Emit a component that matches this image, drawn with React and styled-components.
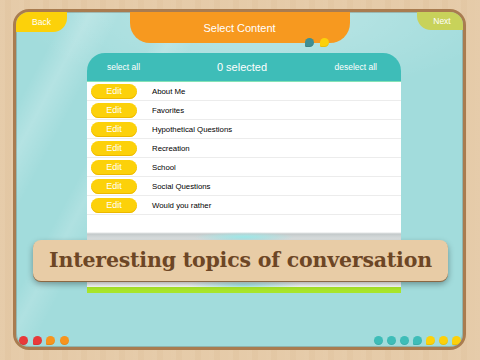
import React from 'react';
import styled, { createGlobalStyle } from 'styled-components';

const Global = createGlobalStyle`
  html, body { margin: 0; padding: 0; }
  body { width: 480px; height: 360px; overflow: hidden; font-family: "Liberation Sans", Arial, sans-serif; }
`;

const Wood = styled.div`
  width: 480px;
  height: 360px;
  box-sizing: border-box;
  padding: 9px 14px 10px 13px;
  display: flex;
  background:
    repeating-linear-gradient(90deg, rgba(255,255,255,0.03) 0 5px, rgba(150,100,50,0.025) 5px 11px, rgba(255,255,255,0.02) 11px 19px),
    #e5caa7;
`;

const Screen = styled.div`
  flex: 1;
  position: relative;
  display: flex;
  flex-direction: column;
  border: 3px solid #a97c50;
  border-radius: 16px;
  overflow: hidden;
  box-shadow: inset 0 0 0 1px rgba(90,60,30,0.25);
  background:
    linear-gradient(118deg, rgba(255,255,255,0) 8%, rgba(255,255,255,0.2) 12%, rgba(255,255,255,0) 17%, rgba(255,255,255,0) 24%, rgba(255,255,255,0.15) 27%, rgba(255,255,255,0) 31%),
    radial-gradient(ellipse 55% 25% at 55% 0%, rgba(255,255,255,0.3), rgba(255,255,255,0)),
    #a2dcdc;
`;

const TopBar = styled.div`
  display: grid;
  grid-template-columns: 1fr 220px 1fr;
  align-items: start;
  height: 31px;
  flex: none;
`;

const Corner = styled.div`
  justify-self: ${p => (p.$side === 'left' ? 'start' : 'end')};
  width: ${p => p.$w}px;
  height: ${p => p.$h}px;
  background: ${p => p.$bg};
  border-bottom-right-radius: ${p => (p.$side === 'left' ? '14px' : '0')};
  border-bottom-left-radius: ${p => (p.$side === 'right' ? '14px' : '0')};
  color: #fff;
  font-size: 8.5px;
  display: flex;
  align-items: center;
  justify-content: center;
  padding-left: ${p => (p.$side === 'right' ? '4px' : '0')};
  box-sizing: border-box;
`;

const Title = styled.div`
  position: relative;
  height: 31px;
  background: #f7991f;
  border-radius: 0 0 20px 20px;
  color: #fff;
  font-size: 11px;
  display: flex;
  align-items: center;
  justify-content: center;
  padding-top: 1px;
  box-sizing: border-box;
`;

const TitleDots = styled.div`
  position: absolute;
  left: 175px;
  top: 26px;
  display: flex;
  gap: 6px;
`;

const Dot = styled.span`
  display: block;
  width: ${p => p.$size || 9}px;
  height: ${p => p.$size || 9}px;
  background: ${p => p.$c};
  border-radius: ${p => (p.$bubble ? '50% 50% 50% 15%' : '50%')};
  box-shadow: inset 0 -1px 0 rgba(0,0,0,0.08);
`;

const Panel = styled.div`
  margin: 10px 0 0 71px;
  width: 314px;
  flex: none;
  display: flex;
  flex-direction: column;
`;

const PanelHeader = styled.div`
  height: 28px;
  border-radius: 18px 18px 0 0;
  background: #3ebdb8;
  border-bottom: 1px solid #84e2b6;
  display: grid;
  grid-template-columns: 1fr auto 1fr;
  align-items: center;
  padding: 0 24px 0 20px;
  color: #fff;
`;

const HeaderText = styled.span`
  font-size: ${p => p.$size}px;
  justify-self: ${p => p.$align};
`;

const Row = styled.div`
  height: 18px;
  border-bottom: 1px solid #ececec;
  background: #fff;
  display: flex;
  align-items: center;
  padding-left: 4px;
`;

const EditPill = styled.span`
  width: 46px;
  height: 15px;
  border-radius: 8px;
  background: #fcd10a;
  box-shadow: inset 0 -1px 0 #ecb800;
  color: #fff;
  font-size: 9px;
  display: flex;
  align-items: center;
  justify-content: center;
  flex: none;
`;

const Label = styled.span`
  margin-left: 15px;
  font-size: 7.8px;
  color: #000;
`;

const PanelFooter = styled.div`
  height: 72px;
  background:
    radial-gradient(ellipse 16% 5px at 50% 22px, rgba(150,235,235,0.9), rgba(150,235,235,0)),
    radial-gradient(ellipse 18% 6px at 50% 70px, rgba(150,235,235,0.8), rgba(150,235,235,0)),
    linear-gradient(to bottom, #fff 0, #fff 17px, #c3c9ca 19px, #dde2e2 24px, #eef1f1 60px, #fff 72px);
`;

const GreenBar = styled.div`
  height: 6px;
  background: #a8e52a;
`;

const Banner = styled.div`
  position: absolute;
  left: 17px;
  top: 228px;
  width: 415px;
  height: 41px;
  border-radius: 8px;
  background: #e8cca6;
  box-shadow: 0 1px 0 #8a6844, 0 3px 6px rgba(0,0,0,0.35);
  display: flex;
  align-items: center;
  justify-content: center;
  font-family: "DejaVu Serif", Georgia, serif;
  font-weight: bold;
  font-size: 20.5px;
  letter-spacing: -0.2px;
  color: #6d4625;
  padding-bottom: 2px;
  box-sizing: border-box;
`;

const BottomDots = styled.div`
  margin-top: auto;
  display: flex;
  justify-content: space-between;
  padding: 0 2px 2px 3px;
`;

const DotGroup = styled.div`
  display: flex;
  gap: ${p => p.$gap}px;
`;

const items = [
  'About Me',
  'Favorites',
  'Hypothetical Questions',
  'Recreation',
  'School',
  'Social Questions',
  'Would you rather',
];

const RED = '#e8393a';
const ORANGE = '#f7941d';
const TEAL = '#3ebdb8';
const YELLOW = '#fcd10a';

export default function App() {
  return (
    <>
      <Global />
      <Wood>
        <Screen>
          <TopBar>
            <Corner $side="left" $w={51} $h={20} $bg="#fcd10a">Back</Corner>
            <Title>
              Select Content
              <TitleDots>
                <Dot $c="#3f8f92" $bubble />
                <Dot $c={YELLOW} $bubble />
              </TitleDots>
            </Title>
            <Corner $side="right" $w={46} $h={18} $bg="#c8d25a">Next</Corner>
          </TopBar>
          <Panel>
            <PanelHeader>
              <HeaderText $size={8.5} $align="start">select all</HeaderText>
              <HeaderText $size={11} $align="center">0 selected</HeaderText>
              <HeaderText $size={8.5} $align="end">deselect all</HeaderText>
            </PanelHeader>
            {items.map(t => (
              <Row key={t}>
                <EditPill>Edit</EditPill>
                <Label>{t}</Label>
              </Row>
            ))}
            <PanelFooter />
            <GreenBar />
          </Panel>
          <BottomDots>
            <DotGroup $gap={4.5}>
              <Dot $c={RED} />
              <Dot $c={RED} $bubble />
              <Dot $c={ORANGE} $bubble />
              <Dot $c={ORANGE} />
            </DotGroup>
            <DotGroup $gap={4}>
              <Dot $c={TEAL} />
              <Dot $c={TEAL} />
              <Dot $c={TEAL} />
              <Dot $c={TEAL} $bubble />
              <Dot $c={YELLOW} $bubble />
              <Dot $c={YELLOW} />
              <Dot $c={YELLOW} $bubble />
            </DotGroup>
          </BottomDots>
          <Banner>Interesting topics of conversation</Banner>
        </Screen>
      </Wood>
    </>
  );
}
